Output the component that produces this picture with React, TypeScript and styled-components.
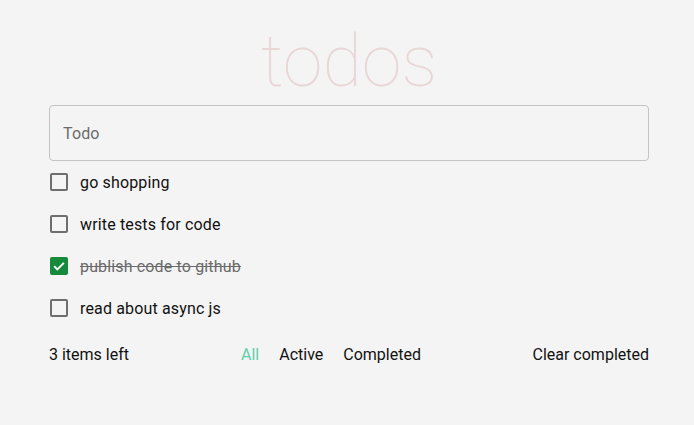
import { useState } from "react";
import styled, { createGlobalStyle } from "styled-components";

const GlobalStyle = createGlobalStyle`
  body {
    margin: 0;
    background: #f4f4f4;
    font-family: Roboto, "Liberation Sans", sans-serif;
  }
`;

type Todo = { id: number; text: string; done: boolean };

const initialTodos: Todo[] = [
  { id: 1, text: "go shopping", done: false },
  { id: 2, text: "write tests for code", done: false },
  { id: 3, text: "publish code to github", done: true },
  { id: 4, text: "read about async js", done: false },
];

const CheckIcon = () => (
  <svg width="18" height="18" viewBox="0 0 24 24">
    <path d="M5.5 12.2l4.3 4.3 8.7-8.7" fill="none" stroke="#fff" strokeWidth="2.6" />
  </svg>
);

const App = () => {
  const [todos, setTodos] = useState<Todo[]>(initialTodos);
  const left = todos.filter((t) => !t.done).length;

  const toggle = (id: number) =>
    setTodos((list) => list.map((t) => (t.id === id ? { ...t, done: !t.done } : t)));

  return (
    <Container>
      <GlobalStyle />
      <Title>todos</Title>
      <Input placeholder="Todo" />
      <List>
        {todos.map((todo) => (
          <Row key={todo.id} onClick={() => toggle(todo.id)}>
            <Box $checked={todo.done}>{todo.done && <CheckIcon />}</Box>
            <Label $done={todo.done}>{todo.text}</Label>
          </Row>
        ))}
      </List>
      <Footer>
        <span>{left} items left</span>
        <Filters>
          <Filter $active>All</Filter>
          <Filter>Active</Filter>
          <Filter>Completed</Filter>
        </Filters>
        <Filter>Clear completed</Filter>
      </Footer>
    </Container>
  );
};

const Container = styled.div`
  width: 600px;
  margin-left: 49px;
  padding-top: 26px;
`;

const Title = styled.h1`
  margin: 0 0 7px;
  font-size: 72px;
  line-height: 1;
  font-weight: 100;
  text-align: center;
  color: rgba(175, 47, 47, 0.15);
`;

const Input = styled.input`
  box-sizing: border-box;
  width: 100%;
  height: 56px;
  padding: 0 13px;
  border: 1px solid #c4c4c4;
  border-radius: 4px;
  background: transparent;
  font-family: inherit;
  font-size: 16px;
  letter-spacing: 0.15px;
  color: #111;
  outline: none;
  &::placeholder {
    color: #6b6b6b;
  }
`;

const List = styled.div`
  display: flex;
  flex-direction: column;
  letter-spacing: 0.15px;
`;

const Row = styled.div`
  height: 42px;
  display: flex;
  align-items: center;
  gap: 12px;
  padding-left: 1px;
  cursor: pointer;
`;

const Box = styled.span<{ $checked?: boolean }>`
  box-sizing: border-box;
  width: 18px;
  height: 18px;
  border-radius: 2px;
  display: flex;
  align-items: center;
  justify-content: center;
  border: ${({ $checked }) => ($checked ? "none" : "2px solid #6e6e6e")};
  background: ${({ $checked }) => ($checked ? "#148a3a" : "transparent")};
`;

const Label = styled.span<{ $done?: boolean }>`
  font-size: 16px;
  color: ${({ $done }) => ($done ? "#6b6b6b" : "#111")};
  text-decoration: ${({ $done }) => ($done ? "line-through" : "none")};
`;

const Footer = styled.div`
  margin-top: 14px;
  height: 22px;
  display: grid;
  grid-template-columns: 192px 1fr auto;
  align-items: center;
  font-size: 16px;
  color: #111;
`;

const Filters = styled.div`
  display: flex;
  gap: 20px;
`;

const Filter = styled.span<{ $active?: boolean }>`
  cursor: pointer;
  color: ${({ $active }) => ($active ? "#5fcfab" : "#111")};
`;

export default App;
